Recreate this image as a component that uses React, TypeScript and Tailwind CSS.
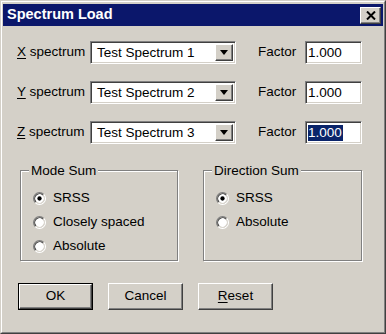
import * as React from "react"

const raised =
  "border border-t-white border-l-white border-b-[#404040] border-r-[#404040] shadow-[inset_-1px_-1px_0_#808080,inset_1px_1px_0_#d4d0c8]"
const sunken =
  "border border-t-[#808080] border-l-[#808080] border-b-white border-r-white shadow-[inset_1px_1px_0_#404040,inset_-1px_-1px_0_#d4d0c8]"

function Radio({ checked }: { checked?: boolean }) {
  return (
    <svg width="13" height="13" viewBox="0 0 12 12" className="shrink-0">
      <circle cx="6" cy="6" r="4.5" fill="#fff" />
      <path d="M2.11 9.89 A5.5 5.5 0 0 1 9.89 2.11" fill="none" stroke="#808080" />
      <path d="M9.89 2.11 A5.5 5.5 0 0 1 2.11 9.89" fill="none" stroke="#fff" />
      <path d="M2.82 9.18 A4.5 4.5 0 0 1 9.18 2.82" fill="none" stroke="#404040" />
      <path d="M9.18 2.82 A4.5 4.5 0 0 1 2.82 9.18" fill="none" stroke="#d4d0c8" />
      {checked && <circle cx="6" cy="6" r="2" fill="#000" />}
    </svg>
  )
}

function Combo({ value }: { value: string }) {
  return (
    <div className={`${sunken} w-[146px] h-[23px] bg-white flex items-center p-[2px] shrink-0`}>
      <span className="flex-1 pl-[4px] leading-none">{value}</span>
      <div className={`${raised} w-[18px] h-full bg-[#d4d0c8] flex items-center justify-center shrink-0`}>
        <svg width="8" height="5" viewBox="0 0 8 5">
          <polygon points="0,0 8,0 4,5" fill="#000" />
        </svg>
      </div>
    </div>
  )
}

function SpectrumRow({
  axis,
  value,
  selected,
}: {
  axis: string
  value: string
  selected?: boolean
}) {
  return (
    <div className="flex items-center h-[23px]">
      <span className="w-[73px] shrink-0">
        <span className="underline underline-offset-2">{axis}</span> spectrum
      </span>
      <Combo value={value} />
      <span className="ml-[22px] w-[47px] shrink-0">Factor</span>
      <div className={`${sunken} w-[57px] h-[23px] bg-white flex items-center pl-[2px] shrink-0`}>
        {selected ? (
          <span className="bg-[#0a246a] text-white leading-[16px] pr-[1px]">1.000</span>
        ) : (
          <span className="leading-none">1.000</span>
        )}
      </div>
    </div>
  )
}

function Group({
  title,
  className,
  children,
}: {
  title: string
  className?: string
  children: React.ReactNode
}) {
  return (
    <div
      className={`border border-[#808080] shadow-[inset_1px_1px_0_#fff,1px_1px_0_#fff] h-[91px] ${className}`}
    >
      <span className="block w-fit -mt-[8px] ml-[8px] px-[2px] bg-[#d4d0c8] leading-[15px]">
        {title}
      </span>
      <div className="flex flex-col mt-[8px] pl-[12px]">{children}</div>
    </div>
  )
}

function Option({ label, checked }: { label: string; checked?: boolean }) {
  return (
    <div className="flex items-center gap-[7px] h-[24px]">
      <Radio checked={checked} />
      <span>{label}</span>
    </div>
  )
}

function Button({ children, primary }: { children: React.ReactNode; primary?: boolean }) {
  return (
    <div className={`w-[75px] h-[27px] ${primary ? "border border-black" : ""}`}>
      <div className={`${raised} h-full flex items-center justify-center bg-[#d4d0c8]`}>
        {children}
      </div>
    </div>
  )
}

export default function App() {
  return (
    <div
      className="w-[386px] h-[334px] bg-[#d4d0c8] text-black text-[13.5px] border border-t-[#d4d0c8] border-l-[#d4d0c8] border-b-[#404040] border-r-[#404040]"
      style={{ fontFamily: '"Liberation Sans", Arial, sans-serif' }}
    >
      <div className="h-full border border-t-white border-l-white border-b-[#808080] border-r-[#808080] px-[1px] pt-[2px] flex flex-col">
        <div className="h-[22px] bg-[#0b176b] flex items-center justify-between pl-[4px] pr-[2px] shrink-0">
          <span className="text-white font-bold text-[14.5px]">Spectrum Load</span>
          <div className={`${raised} w-[21px] h-[17px] bg-[#d4d0c8] flex items-center justify-center shrink-0`}>
            <svg width="10" height="9" viewBox="0 0 10 9">
              <path d="M1 0.5 L9 8.5 M9 0.5 L1 8.5" stroke="#000" strokeWidth="2" />
            </svg>
          </div>
        </div>

        <div className="flex flex-col gap-[17px] pl-[14px] mt-[15px]">
          <SpectrumRow axis="X" value="Test Spectrum 1" />
          <SpectrumRow axis="Y" value="Test Spectrum 2" />
          <SpectrumRow axis="Z" value="Test Spectrum 3" selected />
        </div>

        <div className="flex gap-[25px] pl-[17px] mt-[26px]">
          <Group title="Mode Sum" className="w-[158px]">
            <Option label="SRSS" checked />
            <Option label="Closely spaced" />
            <Option label="Absolute" />
          </Group>
          <Group title="Direction Sum" className="w-[159px]">
            <Option label="SRSS" checked />
            <Option label="Absolute" />
          </Group>
        </div>

        <div className="flex gap-[15px] pl-[15px] mt-[22px]">
          <Button primary>OK</Button>
          <Button>Cancel</Button>
          <Button>
            <span>
              <span className="underline underline-offset-2">R</span>eset
            </span>
          </Button>
        </div>
      </div>
    </div>
  )
}
